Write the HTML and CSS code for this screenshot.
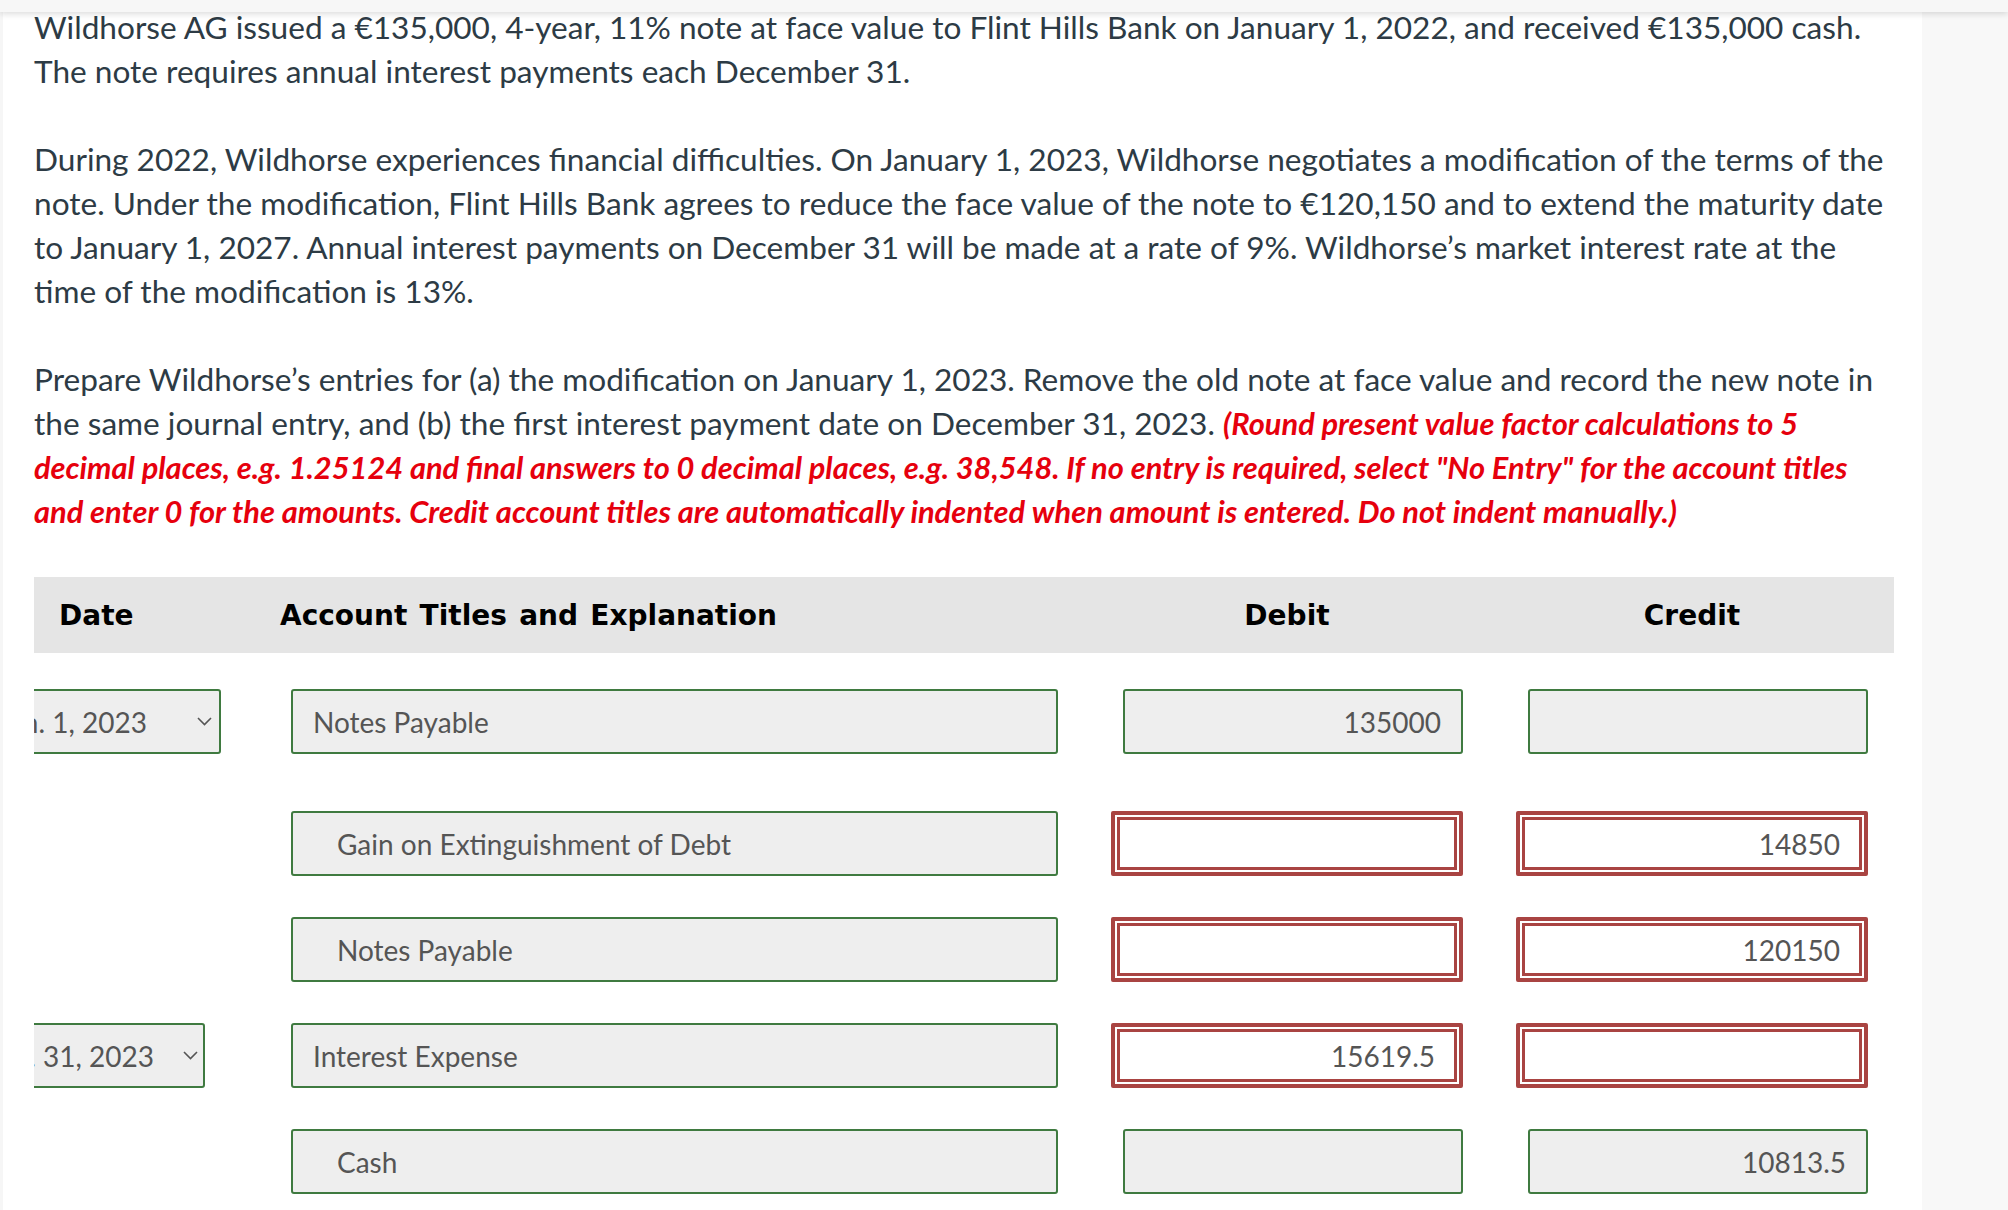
FILE: index.html
```html
<!DOCTYPE html>
<html lang="en">
<head>
<meta charset="utf-8">
<title>Wildhorse AG – Note modification</title>
<link rel="stylesheet" href="styles.css">
</head>
<body>
<div class="topbar"></div>
<div class="page">
  <main class="main">
    <p class="q">Wildhorse AG issued a €135,000, 4-year, 11% note at face value to Flint Hills Bank on January 1, 2022, and received €135,000 cash.<br>The note requires annual interest payments each December 31.</p>
    <p class="q">During 2022, Wildhorse experiences financial difficulties. On January 1, 2023, Wildhorse negotiates a modification of the terms of the<br>note. Under the modification, Flint Hills Bank agrees to reduce the face value of the note to €120,150 and to extend the maturity date<br>to January 1, 2027. Annual interest payments on December 31 will be made at a rate of 9%. Wildhorse’s market interest rate at the<br>time of the modification is 13%.</p>
    <p class="q">Prepare Wildhorse’s entries for (a) the modification on January 1, 2023. Remove the old note at face value and record the new note in<br>the same journal entry, and (b) the first interest payment date on December 31, 2023. <strong class="note">(Round present value factor calculations to 5<br>decimal places, e.g. 1.25124 and final answers to 0 decimal places, e.g. 38,548. If no entry is required, select "No Entry" for the account titles<br>and enter 0 for the amounts. Credit account titles are automatically indented when amount is entered. Do not indent manually.)</strong></p>

    <div class="journal">
      <div class="jhead">
        <div class="jh jh-date">Date</div>
        <div class="jh jh-acct">Account Titles and Explanation</div>
        <div class="jh jh-amt">Debit</div>
        <div class="jh jh-amt jh-credit">Credit</div>
      </div>

      <div class="jrow jrow-first">
        <div class="jdate">
          <div class="sel sel-jan"><span class="sel-text">Jan. 1, 2023</span><svg class="chev" width="15" height="9" viewBox="0 0 15 9"><polyline points="1,1 7.5,7.5 14,1" fill="none" stroke="#555" stroke-width="1.6"/></svg></div>
        </div>
        <div class="field acct">Notes Payable</div>
        <div class="amt"><div class="field num">135000</div></div>
        <div class="amt"><div class="field num"></div></div>
      </div>

      <div class="jrow">
        <div class="jdate"></div>
        <div class="field acct indent">Gain on Extinguishment of Debt</div>
        <div class="amt"><div class="field num err"></div></div>
        <div class="amt"><div class="field num err">14850</div></div>
      </div>

      <div class="jrow">
        <div class="jdate"></div>
        <div class="field acct indent">Notes Payable</div>
        <div class="amt"><div class="field num err"></div></div>
        <div class="amt"><div class="field num err">120150</div></div>
      </div>

      <div class="jrow">
        <div class="jdate">
          <div class="sel sel-dec"><span class="sel-text">Dec. 31, 2023</span><svg class="chev" width="15" height="9" viewBox="0 0 15 9"><polyline points="1,1 7.5,7.5 14,1" fill="none" stroke="#555" stroke-width="1.6"/></svg></div>
        </div>
        <div class="field acct">Interest Expense</div>
        <div class="amt"><div class="field num err">15619.5</div></div>
        <div class="amt"><div class="field num err"></div></div>
      </div>

      <div class="jrow">
        <div class="jdate"></div>
        <div class="field acct indent">Cash</div>
        <div class="amt"><div class="field num"></div></div>
        <div class="amt"><div class="field num">10813.5</div></div>
      </div>
    </div>
  </main>
  <aside class="side"></aside>
</div>
</body>
</html>
```

FILE: styles.css
```css
* { box-sizing: border-box; }

html, body {
  margin: 0;
  padding: 0;
  background: #ffffff;
}

body {
  font-family: Lato, "Liberation Sans", sans-serif;
  color: #2d3b45;
  overflow: hidden;
}

.topbar {
  position: fixed;
  top: 0;
  left: 0;
  right: 0;
  height: 12px;
  background: #f7f7f7;
  box-shadow: 0 2px 6px rgba(0, 0, 0, 0.14);
  z-index: 5;
}

.page {
  display: flex;
  min-height: 1210px;
}

.main {
  width: 1922px;
  flex-shrink: 0;
  padding: 5px 28px 0 31px;
  border-left: 3px solid #f6f6f6;
  background: #ffffff;
}

.side {
  flex: 1;
  background: #f8f8f8;
}

.q {
  margin: 0 0 44px 0;
  width: 1880px;
  font-size: 31.6px;
  line-height: 44px;
  font-weight: 400;
  white-space: nowrap;
}

.note {
  color: #e6000d;
  font-weight: 700;
  font-style: italic;
  font-size: 30.8px;
  line-height: 1;
}

/* journal table */
.journal {
  width: 1860px;
  overflow: hidden;
}

.jhead {
  display: flex;
  align-items: center;
  height: 76px;
  background: #e5e5e5;
  margin-bottom: 36px;
  font-family: "DejaVu Sans", Verdana, sans-serif;
  font-weight: 700;
  font-size: 28px;
  color: #000;
}

.jh-date {
  width: 246px;
  padding-left: 25px;
}

.jh-acct {
  width: 831px;
  word-spacing: 2.5px;
}

.jh-amt {
  width: 352px;
  text-align: center;
}

.jh-credit {
  margin-left: 53px;
}

.jrow {
  display: grid;
  grid-template-columns: 204px 767px 352px 352px;
  column-gap: 53px;
  height: 65px;
  margin-bottom: 41px;
}

.jrow-first {
  margin-bottom: 57px;
}

.jdate {
  display: flex;
  justify-content: flex-end;
  overflow: hidden;
}

.sel {
  flex-shrink: 0;
  display: flex;
  align-items: center;
  height: 65px;
  padding-left: 80px;
  background: #eeeeee;
  border: 2px solid #3f7a40;
  border-radius: 3px;
  font-size: 28px;
  color: #555555;
}

.sel-jan {
  margin-right: 17px;
  padding-right: 7px;
}

.sel-jan .chev { margin-left: 50px; }

.sel-dec {
  margin-right: 33px;
  padding-right: 5px;
}

.sel-dec .chev { margin-left: 29px; }

.chev { display: block; flex-shrink: 0; }

.field {
  display: flex;
  align-items: center;
  height: 65px;
  padding: 0 20px;
  background: #eeeeee;
  border: 2px solid #3f7a40;
  border-radius: 3px;
  font-size: 28px;
  color: #555555;
  white-space: nowrap;
}

.acct.indent {
  padding-left: 44px;
}

.amt {
  display: flex;
  justify-content: flex-end;
}

.num {
  width: 340px;
  justify-content: flex-end;
}

.num.err {
  width: 352px;
  background: #ffffff;
  border: 4px solid #a94442;
  border-radius: 2px;
  box-shadow: inset 0 0 0 2px #ffffff, inset 0 0 0 5px #a94442;
  padding-right: 24px;
}
```
